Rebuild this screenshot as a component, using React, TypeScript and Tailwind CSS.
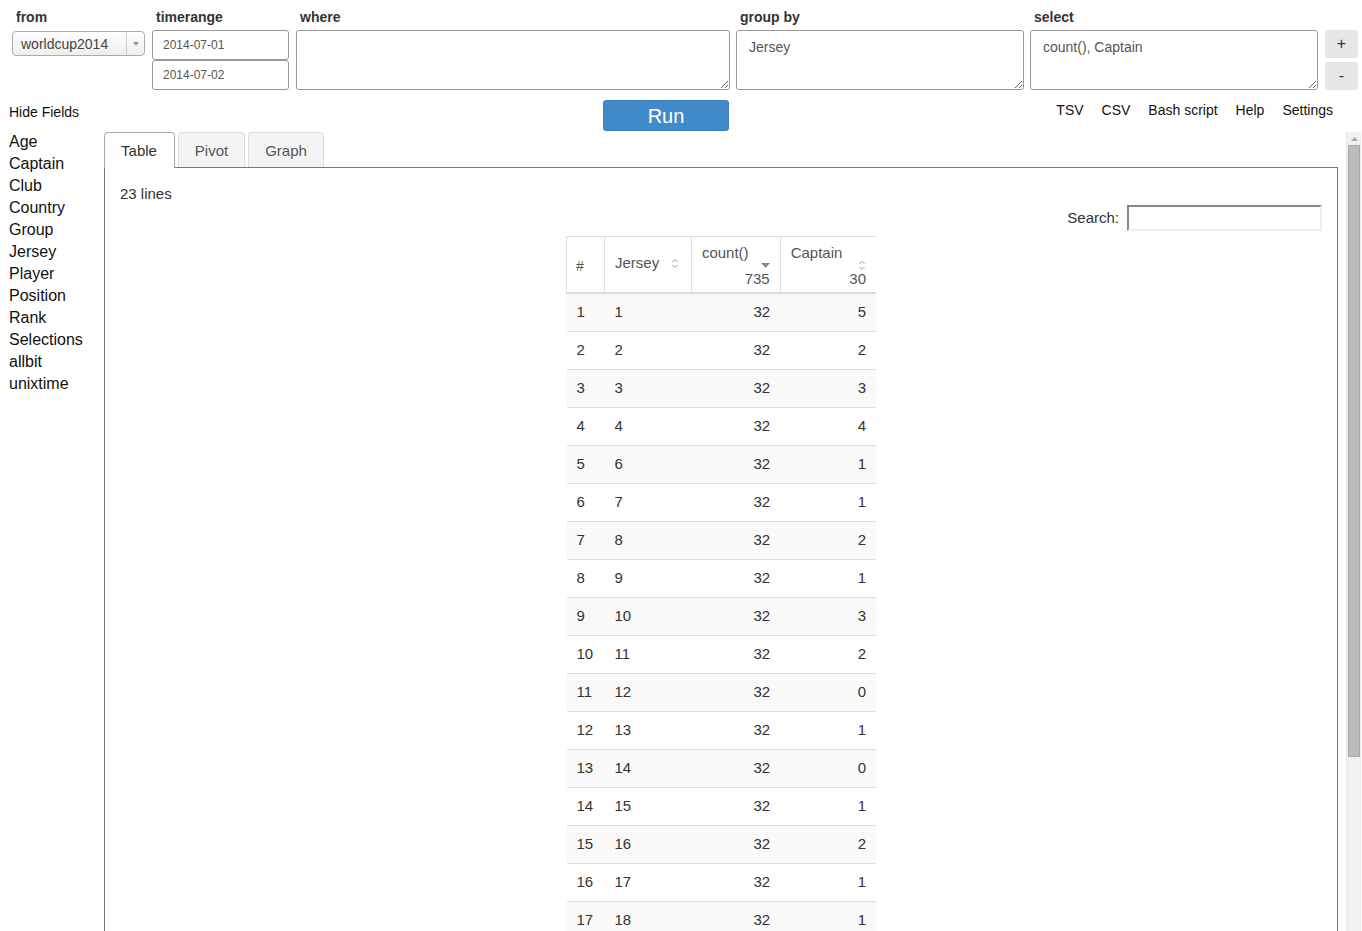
import React from "react";

const fields = ["Age", "Captain", "Club", "Country", "Group", "Jersey", "Player", "Position", "Rank", "Selections", "allbit", "unixtime"];

const rows: [number, number, number, number][] = [
  [1, 1, 32, 5], [2, 2, 32, 2], [3, 3, 32, 3], [4, 4, 32, 4], [5, 6, 32, 1], [6, 7, 32, 1],
  [7, 8, 32, 2], [8, 9, 32, 1], [9, 10, 32, 3], [10, 11, 32, 2], [11, 12, 32, 0], [12, 13, 32, 1],
  [13, 14, 32, 0], [14, 15, 32, 1], [15, 16, 32, 2], [16, 17, 32, 1], [17, 18, 32, 1], [18, 19, 32, 1],
  [19, 20, 32, 0], [20, 21, 32, 1], [21, 22, 32, 0], [22, 23, 32, 1], [23, 5, 31, 0],
];

function SortBoth() {
  return (
    <svg width="8" height="11" viewBox="0 0 8 11" className="block">
      <path d="M1.5 4 L4 1.5 L6.5 4" fill="none" stroke="#999" strokeWidth="1" />
      <path d="M1.5 7 L4 9.5 L6.5 7" fill="none" stroke="#999" strokeWidth="1" />
    </svg>
  );
}

function SortDesc() {
  return (
    <svg width="9" height="5" viewBox="0 0 9 5" className="block">
      <path d="M0 0 L9 0 L4.5 5 Z" fill="#888" />
    </svg>
  );
}

export default function App() {
  const font = { fontFamily: '"Liberation Sans", Arial, sans-serif' };
  return (
    <div className="h-screen overflow-hidden bg-white text-[#333]" style={font}>
      {/* top row */}
      <div className="flex items-start pl-[12px] pt-[7px]">
        <div className="flex w-[133px] flex-col">
          <div className="h-[20px] pl-[4px] text-[14px] font-bold leading-[20px]">from</div>
          <div className="mt-[4px] flex h-[25px] items-center rounded-[4px] border border-[#aaa] bg-gradient-to-b from-white to-[#eee]">
            <span className="flex-1 pl-[8px] pt-[1px] text-[14px] text-[#444]">worldcup2014</span>
            <span className="flex h-full w-[18px] items-center justify-center border-l border-[#ccc]">
              <svg width="6" height="4" viewBox="0 0 6 4"><path d="M0 0 L6 0 L3 4 Z" fill="#999" /></svg>
            </span>
          </div>
        </div>
        <div className="ml-[7px] flex w-[137px] flex-col">
          <div className="h-[20px] pl-[4px] text-[14px] font-bold leading-[20px]">timerange</div>
          <input readOnly value="2014-07-01" className="mt-[3px] h-[30px] rounded-[3px] border border-[#999] px-[10px] text-[12px] text-[#555] outline-none" />
          <input readOnly value="2014-07-02" className="h-[30px] rounded-[3px] border border-[#999] px-[10px] text-[12px] text-[#555] outline-none" />
        </div>
        <div className="ml-[7px] flex w-[434px] flex-col">
          <div className="h-[20px] pl-[4px] text-[14px] font-bold leading-[20px]">where</div>
          <textarea readOnly className="mt-[3px] h-[60px] rounded-[3px] border border-[#999] px-[12px] py-[6px] text-[14px] text-[#555] outline-none" />
        </div>
        <div className="ml-[6px] flex w-[288px] flex-col">
          <div className="h-[20px] pl-[4px] text-[14px] font-bold leading-[20px]">group by</div>
          <textarea readOnly value="Jersey" className="mt-[3px] h-[60px] rounded-[3px] border border-[#999] px-[12px] py-[6px] text-[14px] leading-[20px] text-[#555] outline-none" />
        </div>
        <div className="ml-[6px] flex w-[288px] flex-col">
          <div className="h-[20px] pl-[4px] text-[14px] font-bold leading-[20px]">select</div>
          <textarea readOnly value="count(), Captain" className="mt-[3px] h-[60px] rounded-[3px] border border-[#999] px-[12px] py-[6px] text-[14px] leading-[20px] text-[#555] outline-none" />
        </div>
        <div className="ml-[7px] mt-[23px] flex w-[33px] flex-col gap-[4px]">
          <button className="h-[28px] rounded-[3px] bg-[#e6e6e6] text-[16px] leading-none text-[#333]">+</button>
          <button className="h-[28px] rounded-[3px] bg-[#e6e6e6] text-[16px] leading-none text-[#333]">-</button>
        </div>
      </div>

      {/* second row */}
      <div className="mt-[10px] flex h-[31px] items-start">
        <div className="mt-[2px] w-[603px] pl-[9px] text-[14px] leading-[20px] text-[#111]">Hide Fields</div>
        <button className="h-[31px] w-[126px] rounded-[3px] border border-[#3a7fbc] bg-[#428bca] text-[20px] leading-none text-white">Run</button>
        <div className="flex flex-1 justify-end gap-[18px] pr-[29px] text-[14px] leading-[20px] text-[#111]">
          <span>TSV</span>
          <span>CSV</span>
          <span>Bash script</span>
          <span>Help</span>
          <span>Settings</span>
        </div>
      </div>

      {/* body */}
      <div className="flex">
        <div className="w-[104px] pl-[9px] text-[16px] leading-[22px] text-[#111]">
          {fields.map((f) => (
            <div key={f}>{f}</div>
          ))}
        </div>
        <div className="relative mt-[1px] h-[817px] w-[1257px] overflow-hidden">
          <div className="w-[1234px]">
            {/* tabs */}
            <div className="relative z-10 -mb-[1px] flex h-[36px] items-start">
              <div className="flex h-[36px] w-[71px] items-center justify-center rounded-t-[4px] border border-b-0 border-[#aaa] bg-white pt-[2px] pr-[1px] text-[15px] text-[#333]">
                Table
              </div>
              <div className="ml-[3px] flex h-[35px] w-[67px] items-center justify-center rounded-t-[4px] border border-b-0 border-[#ddd] bg-[#f4f4f4] pt-[2px] text-[15px] text-[#555]">
                Pivot
              </div>
              <div className="ml-[3px] flex h-[35px] w-[76px] items-center justify-center rounded-t-[4px] border border-b-0 border-[#ddd] bg-[#f4f4f4] pt-[2px] text-[15px] text-[#555]">
                Graph
              </div>
            </div>
            {/* panel */}
            <div className="border border-b-0 border-[#777] px-[15px] pt-[16px] pb-[40px]">
              <div className="text-[15px] leading-[20px] text-[#333]">23 lines</div>
              <div className="mt-[1px] flex h-[26px] items-center justify-end">
                <span className="mr-[8px] text-[15px] text-[#333]">Search:</span>
                <input readOnly className="h-[26px] w-[195px] border-2 border-t-[#888] border-l-[#888] border-r-[#eee] border-b-[#eee] outline-none" />
              </div>
              <table className="mx-auto mt-[5px] w-[310px] border-collapse text-[15px] text-[#333]">
                <thead>
                  <tr className="h-[56px] border-t border-[#ddd]">
                    <th className="w-[38px] border-b-2 border-l border-r border-[#ddd] px-[9px] pt-[4px] text-left align-middle text-[14px] font-normal text-[#555]">#</th>
                    <th className="w-[87px] border-b-2 border-r border-[#ddd] px-[10px] text-left align-middle font-normal text-[#555]">
                      <div className="-mt-[2px] flex items-center justify-between pr-[2px]">
                        <span>Jersey</span>
                        <SortBoth />
                      </div>
                    </th>
                    <th className="w-[89px] border-b-2 border-r border-[#ddd] p-0 px-[10px] text-left align-top font-normal text-[#555]">
                      <div className="mt-[7px] h-[18px] leading-[18px]">count()</div>
                      <div className="flex h-[6px] items-center justify-end"><SortDesc /></div>
                      <div className="mt-[2px] h-[18px] text-right leading-[18px]">735</div>
                    </th>
                    <th className="w-[96px] border-b-2 border-[#ddd] p-0 px-[10px] text-left align-top font-normal text-[#555]">
                      <div className="mt-[7px] h-[18px] leading-[18px]">Captain</div>
                      <div className="flex h-[6px] items-center justify-end"><SortBoth /></div>
                      <div className="mt-[2px] h-[18px] text-right leading-[18px]">30</div>
                    </th>
                  </tr>
                </thead>
                <tbody>
                  {rows.map((r, i) => (
                    <tr key={r[0]} className={`${i === 0 ? "h-[39px]" : "h-[38px]"} border-t border-[#ddd] ${i % 2 === 0 ? "bg-[#f9f9f9]" : "bg-white"}`}>
                      <td className="px-[10px]">{r[0]}</td>
                      <td className="px-[10px]">{r[1]}</td>
                      <td className="px-[10px] text-right">{r[2]}</td>
                      <td className="px-[10px] text-right">{r[3]}</td>
                    </tr>
                  ))}
                </tbody>
              </table>
            </div>
          </div>
          {/* scrollbar overlay */}
          <div className="absolute right-0 top-0 flex h-full w-[15px] flex-col items-center border-l border-[#e8e8e8] bg-[#f1f1f1]">
            <div className="flex h-[13px] w-full items-center justify-center">
              <svg width="7" height="4" viewBox="0 0 7 4"><path d="M0 4 L3.5 0 L7 4 Z" fill="#a3a3a3" /></svg>
            </div>
            <div className="h-[612px] w-[12px] border border-[#a8a8a8] bg-[#bcbcbc]" />
          </div>
        </div>
      </div>
    </div>
  );
}
